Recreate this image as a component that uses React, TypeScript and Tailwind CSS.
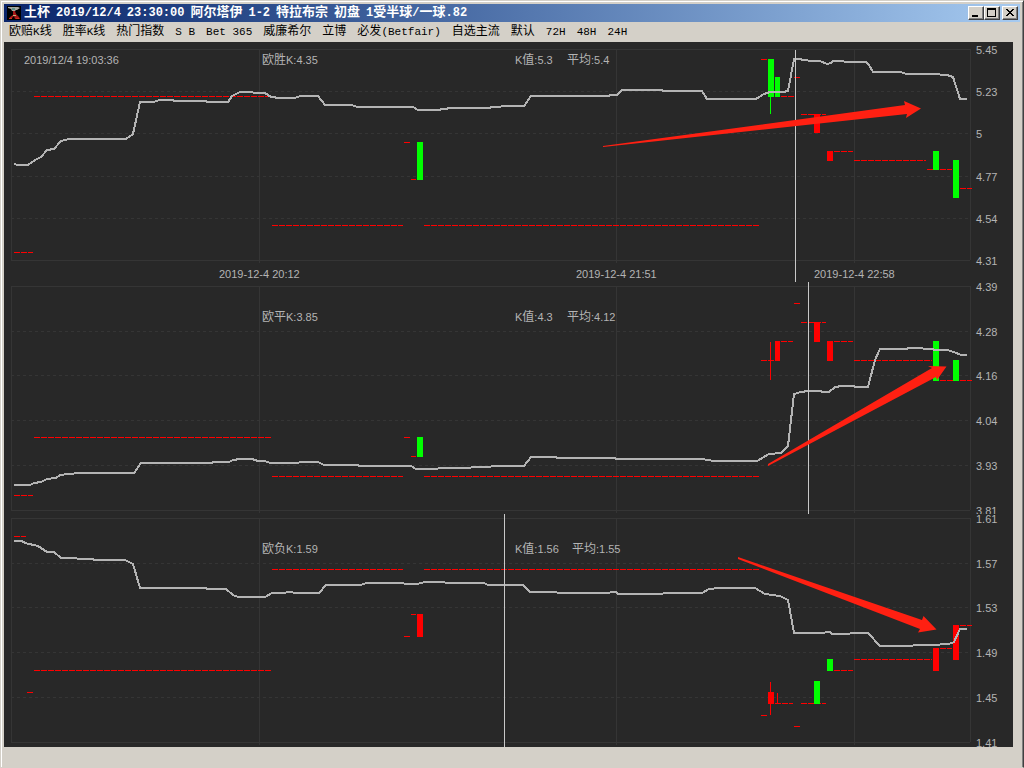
type Dash = [x1: number, x2: number, y: number]
type Bar = { x: number; y: number; w: number; h: number; up?: boolean }
type Wick = { x: number; y1: number; y2: number; up?: boolean }

interface Panel {
    id: string
    top: number
    height: number
    name: string
    time?: string
    kValue: string
    average: string
    averageX: number
    textY: number
    rows: number[]
    scale: string[]
    dates?: boolean
    curve: string
    dashes: Dash[]
    bars: Bar[]
    wicks: Wick[]
    cursor: number
    arrow: string
}

const MENU = [
    '欧赔K线', '胜率K线', '热门指数', 'S B', 'Bet 365', '威廉希尔', '立博',
    '必发(Betfair)', '自选主流', '默认', '72H', '48H', '24H',
]

const TITLE = '土杯 2019/12/4 23:30:00 阿尔塔伊 1-2 特拉布宗 初盘 1受半球/一球.82'

const LEFT = 11
const RIGHT = 970

const COLUMNS = [
    { x: 259, label: '2019-12-4 20:12' },
    { x: 616, label: '2019-12-4 21:51' },
    { x: 854, label: '2019-12-4 22:58' },
]

const PANELS: Panel[] = [
    {
        id: 'win',
        top: 42,
        height: 240,
        name: '欧胜K:4.35',
        time: '2019/12/4 19:03:36',
        kValue: 'K值:5.3',
        average: '平均:5.4',
        averageX: 567,
        textY: 64,
        rows: [49, 91, 133, 176, 218, 260],
        scale: ['5.45', '5.23', '5', '4.77', '4.54', '4.31'],
        dates: true,
        curve: '14,164 18,165 28,165 35,160 41,157 47,150 54,149 61,141 69,139 126,139 133,134 140,102 153,102 160,100 173,100 174,101 206,101 207,102 228,102 232,96 240,92 252,92 254,93 265,93 271,97 280,98 295,98 300,96 318,96 325,105 351,105 358,107 413,107 418,110 437,110 451,108 490,108 491,107 511,106 524,106 531,96 609,96 610,95 617,95 622,90 662,90 663,91 702,91 707,99 756,99 764,94 770,92 783,92 788,91 794,59 801,59 802,60 813,61 820,61 827,64 831,63 833,61 837,61 850,62 866,62 869,65 873,72 900,72 907,74 933,74 947,75 953,77 960,99 967,99',
        dashes: [
            [34, 271, 96], [14, 33, 252], [272, 403, 225], [424, 760, 225],
            [404, 410, 142], [411, 416, 179], [761, 767, 59], [781, 794, 96],
            [794, 800, 77], [801, 826, 114], [834, 853, 151], [854, 926, 160],
            [927, 933, 169], [940, 952, 169], [960, 972, 188],
        ],
        bars: [
            { x: 417, y: 142, w: 6, h: 38, up: true },
            { x: 768, y: 59, w: 6, h: 38, up: true },
            { x: 775, y: 77, w: 5, h: 20, up: true },
            { x: 814, y: 114, w: 6, h: 19 },
            { x: 827, y: 151, w: 6, h: 10 },
            { x: 933, y: 151, w: 6, h: 19, up: true },
            { x: 953, y: 160, w: 6, h: 38, up: true },
        ],
        wicks: [{ x: 770, y1: 97, y2: 114, up: true }],
        cursor: 795,
        arrow: '603,146 905,105 904,101 921,108.5 906,118 907,114 603,147',
    },
    {
        id: 'draw',
        top: 282,
        height: 232,
        name: '欧平K:3.85',
        kValue: 'K值:4.3',
        average: '平均:4.12',
        averageX: 567,
        textY: 321,
        rows: [286, 331, 375, 420, 465, 510],
        scale: ['4.39', '4.28', '4.16', '4.04', '3.93', '3.81'],
        curve: '14,485 30,485 34,483 41,482 47,479 56,478 60,475 69,474 80,473 134,473 141,463 212,463 213,462 229,462 233,460 240,459 252,459 258,461 265,461 270,463 298,463 300,462 318,462 324,465 358,465 359,466 411,466 416,469 437,469 439,468 470,468 472,467 490,467 492,466 524,466 531,457 556,457 557,458 615,458 616,459 702,459 714,461 757,461 769,454 781,453 788,446 794,394 801,392 808,391 821,391 822,392 829,392 835,387 842,386 854,386 855,387 868,387 875,360 880,349 907,349 908,348 914,348 932,349 935,350 947,350 954,352 961,355 967,355',
        dashes: [
            [34, 271, 437], [14, 33, 495], [272, 403, 476], [424, 760, 476],
            [404, 410, 437], [411, 416, 456], [761, 774, 360], [781, 793, 341],
            [794, 800, 303], [801, 826, 322], [834, 853, 341], [854, 932, 360],
            [940, 953, 380], [960, 972, 380],
        ],
        bars: [
            { x: 417, y: 437, w: 6, h: 20, up: true },
            { x: 775, y: 341, w: 5, h: 20 },
            { x: 814, y: 322, w: 6, h: 20 },
            { x: 827, y: 341, w: 6, h: 20 },
            { x: 933, y: 341, w: 6, h: 40, up: true },
            { x: 953, y: 360, w: 6, h: 21, up: true },
        ],
        wicks: [{ x: 770, y1: 342, y2: 380 }],
        cursor: 808,
        arrow: '768,464 932,368 928,366 946.5,366.5 937,380 936,377 768,466',
    },
    {
        id: 'loss',
        top: 514,
        height: 233,
        name: '欧负K:1.59',
        kValue: 'K值:1.56',
        average: '平均:1.55',
        averageX: 572,
        textY: 553,
        rows: [518, 563, 607, 652, 697, 742],
        scale: ['1.61', '1.57', '1.53', '1.49', '1.45', '1.41'],
        curve: '14,541 22,541 25,543 38,546 47,552 54,552 61,558 93,559 94,560 125,560 133,564 140,588 206,588 207,589 226,589 233,595 238,597 265,597 272,593 285,593 287,592 292,592 294,593 319,593 326,585 361,585 366,583 403,583 405,584 417,584 425,582 444,582 446,583 484,583 488,585 523,585 530,592 556,592 558,593 609,593 611,592 616,592 618,594 662,594 664,593 702,593 709,589 720,588 755,588 765,594 780,596 788,600 794,633 824,633 826,632 830,632 832,634 868,633 880,646 895,646 932,645 949,644 954,642 960,629 967,629',
        dashes: [
            [14, 26, 536], [27, 33, 692], [34, 271, 670], [272, 403, 569],
            [424, 760, 569], [404, 410, 636], [411, 416, 614], [761, 767, 715],
            [775, 793, 703], [794, 800, 726], [801, 826, 703], [834, 853, 670],
            [854, 932, 659], [940, 952, 648], [960, 972, 625],
        ],
        bars: [
            { x: 417, y: 614, w: 6, h: 23 },
            { x: 768, y: 692, w: 6, h: 12 },
            { x: 814, y: 681, w: 6, h: 23, up: true },
            { x: 827, y: 659, w: 6, h: 12, up: true },
            { x: 933, y: 648, w: 6, h: 23 },
            { x: 953, y: 625, w: 6, h: 35 },
        ],
        wicks: [
            { x: 770, y1: 682, y2: 715 },
            { x: 777, y1: 693, y2: 703 },
        ],
        cursor: 504,
        arrow: '738,557 922,620 923.5,616 936.5,629.5 918,632.5 920,629 738,559',
    },
]

// Han characters need their own size next to the latin ones
const splitHan = (s: string) => s.split(/([\u4e00-\u9fff]+)/).filter(Boolean)
const isHan = (s: string) => /[\u4e00-\u9fff]/.test(s)

function ChartText({ x, y, children }: { x: number; y: number; children: string }) {
    return (
        <text x={x} y={y} className="fill-[#b4b4b4] text-[11px]">
            {splitHan(children).map((part, i) => (
                <tspan key={i} className={isHan(part) ? 'text-[12px]' : 'text-[11px]'}>
                    {part}
                </tspan>
            ))}
        </text>
    )
}

function OddsChart({ panel }: { panel: Panel }) {
    const first = panel.rows[0]
    const last = panel.rows[panel.rows.length - 1]

    return (
        <svg
            viewBox={`4 ${panel.top} 1009 ${panel.height}`}
            className="block w-full overflow-hidden font-['Liberation_Sans','Noto_Sans_CJK_SC',sans-serif]"
            role="img"
            aria-label={panel.name}
        >
            {/* GRID */}
            <g stroke="#353535" shapeRendering="crispEdges">
                {panel.rows.map((y) => (
                    <line
                        key={y}
                        x1={LEFT}
                        x2={RIGHT}
                        y1={y + 0.5}
                        y2={y + 0.5}
                        strokeDasharray={y === first || y === last ? undefined : '3 3'}
                    />
                ))}
                <line x1={LEFT + 0.5} x2={LEFT + 0.5} y1={first} y2={last} />
                <line x1={RIGHT + 0.5} x2={RIGHT + 0.5} y1={first} y2={last} />
                {COLUMNS.map((c) => (
                    <line key={c.x} x1={c.x + 0.5} x2={c.x + 0.5} y1={first} y2={last + 3} />
                ))}
            </g>

            {/* CANDLES */}
            <g shapeRendering="crispEdges">
                {panel.dashes.map(([x1, x2, y]) => (
                    <line
                        key={`${x1}-${y}`}
                        x1={x1}
                        x2={x2}
                        y1={y + 0.5}
                        y2={y + 0.5}
                        stroke="#ff0000"
                        strokeDasharray="6 1"
                    />
                ))}
                {panel.wicks.map((w) => (
                    <line
                        key={w.x}
                        x1={w.x + 0.5}
                        x2={w.x + 0.5}
                        y1={w.y1}
                        y2={w.y2}
                        stroke={w.up ? '#00ff00' : '#ff0000'}
                    />
                ))}
                {panel.bars.map((b) => (
                    <rect
                        key={b.x}
                        x={b.x}
                        y={b.y}
                        width={b.w}
                        height={b.h}
                        fill={b.up ? '#00ff00' : '#ff0000'}
                    />
                ))}
                <polyline points={panel.curve} fill="none" stroke="#b4b4b4" strokeWidth="2" />
                <line
                    x1={panel.cursor + 0.5}
                    x2={panel.cursor + 0.5}
                    y1={panel.dates ? first + 1 : panel.top}
                    y2={panel.top + panel.height}
                    stroke="#c8c8c8"
                />
            </g>

            {/* LABELS */}
            {panel.time && <ChartText x={24} y={panel.textY}>{panel.time}</ChartText>}
            <ChartText x={262} y={panel.textY}>{panel.name}</ChartText>
            <ChartText x={515} y={panel.textY}>{panel.kValue}</ChartText>
            <ChartText x={panel.averageX} y={panel.textY}>{panel.average}</ChartText>
            {panel.scale.map((v, i) => (
                <ChartText key={v} x={976} y={panel.rows[i] + 5}>{v}</ChartText>
            ))}
            {panel.dates && COLUMNS.map((c) => (
                <ChartText key={c.x} x={c.x - 40} y={278}>{c.label}</ChartText>
            ))}

            <polygon points={panel.arrow} fill="#ff2012" />
        </svg>
    )
}

function AppIcon() {
    return (
        <svg viewBox="0 0 14 14" className="size-3.5 shrink-0" aria-hidden="true">
            <rect width="14" height="14" fill="#000" />
            <path d="M1 1h10l2 1-3 2H9L8 5H5L4 3 1 2z" fill="#a8a8a0" />
            <path d="M5 2h3v2H5z" fill="#5d8f86" />
            <path d="M6 5h2l1 3 3 3 1 2H8l-1-3-2 2v1H2l1-2 3-2z" fill="#a81818" />
            <path d="M6 9h3v1H6z" fill="#c8b070" />
            <path d="M2 12h3v1H2zM9 12h3v1H9z" fill="#d03020" />
        </svg>
    )
}

const WINDOW_BUTTON =
    'flex h-3.5 w-4 items-center justify-center bg-[#d4d0c8] border border-t-white border-l-white border-r-[#404040] border-b-[#404040] shadow-[inset_-1px_-1px_0_#808080]'

function TitleBar() {
    return (
        <header className="flex h-[18px] items-center justify-between bg-linear-to-r from-[#0a246a] to-[#a6caf0] pl-[3px] pr-0.5">
            <div className="flex items-center gap-[3px]">
                <AppIcon />
                <h1 className="flex items-center gap-1.5 whitespace-nowrap font-['Liberation_Mono','Noto_Sans_CJK_SC',monospace] text-[12px] leading-[18px] font-bold text-white">
                    {TITLE.split(' ').map((word, i) => (
                        <span key={i}>
                            {splitHan(word).map((part, j) => (
                                <span key={j} className={isHan(part) ? 'text-[13px]' : 'text-[12px]'}>
                                    {part}
                                </span>
                            ))}
                        </span>
                    ))}
                </h1>
            </div>

            <div className="flex">
                <button className={WINDOW_BUTTON} aria-label="最小化">
                    <svg viewBox="0 0 12 10" className="h-2.5 w-3" shapeRendering="crispEdges">
                        <rect x="2" y="7" width="6" height="2" />
                    </svg>
                </button>
                <button className={WINDOW_BUTTON} aria-label="最大化">
                    <svg viewBox="0 0 12 10" className="h-2.5 w-3" shapeRendering="crispEdges">
                        <path d="M1 0h9v9H1zM2 2v6h7V2z" fillRule="evenodd" />
                    </svg>
                </button>
                <button className={`${WINDOW_BUTTON} ml-0.5`} aria-label="关闭">
                    <svg viewBox="0 0 12 10" className="h-2.5 w-3" shapeRendering="crispEdges">
                        <path d="M2 1h2v1h1v1h2V2h1V1h2v1H9v1H8v1H7v1h1v1h1v1h1v1H8V7H7V6H5v1H4v1H2V7h1V6h1V5h1V4H4V3H3V2H2z" />
                    </svg>
                </button>
            </div>
        </header>
    )
}

export default function App() {
    return (
        <div className="min-h-screen border border-t-[#d4d0c8] border-r-[#404040] border-b-[#d4d0c8] border-l-[#d4d0c8] bg-[#d4d0c8] shadow-[inset_1px_1px_0_#ffffff,inset_-1px_0_0_#808080]">
            <div className="px-[3px] pt-[3px]">
                <TitleBar />

                <nav className="flex h-5 items-center gap-[11px] whitespace-nowrap pl-[5px] font-['Liberation_Mono','Noto_Sans_CJK_SC',monospace] text-[11px] leading-5 text-black">
                    {MENU.map((item) => (
                        <button key={item}>
                            {splitHan(item).map((part, i) => (
                                <span key={i} className={isHan(part) ? 'text-[12px]' : 'text-[11px]'}>
                                    {part}
                                </span>
                            ))}
                        </button>
                    ))}
                </nav>
            </div>

            <main className="ml-[3px] mr-2.5 bg-[#282828]">
                {PANELS.map((p) => (
                    <OddsChart key={p.id} panel={p} />
                ))}
            </main>
        </div>
    )
}
